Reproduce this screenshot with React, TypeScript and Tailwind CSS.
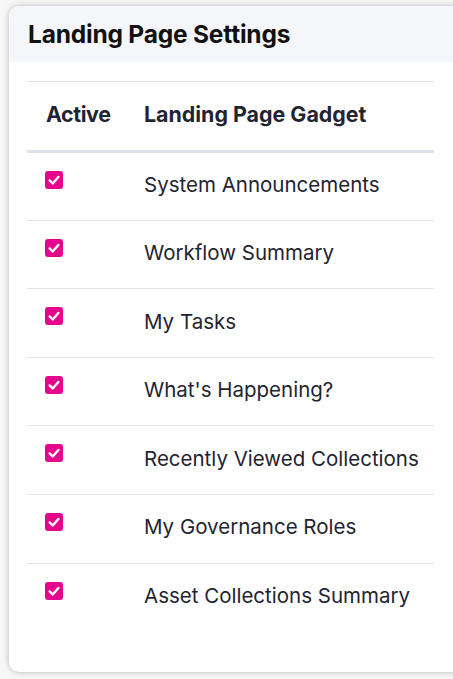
const gadgets = [
  "System Announcements",
  "Workflow Summary",
  "My Tasks",
  "What's Happening?",
  "Recently Viewed Collections",
  "My Governance Roles",
  "Asset Collections Summary",
];

function CheckBox() {
  return (
    <span className="flex h-[18px] w-[18px] items-center justify-center rounded-[3px] bg-[#e5068c]">
      <svg viewBox="0 0 16 16" className="h-[14px] w-[14px]">
        <path
          d="M3 8.5 L6.5 12 L13 4.5"
          fill="none"
          stroke="white"
          strokeWidth="2.8"
          strokeLinecap="round"
          strokeLinejoin="round"
        />
      </svg>
    </span>
  );
}

export default function App() {
  return (
    <div
      className="h-[679px] w-[453px] overflow-hidden bg-[#f7f7f7] pl-[9px] pt-[6px]"
      style={{ fontFamily: "Inter, 'Noto Sans', sans-serif" }}
    >
      <div className="h-[666px] w-[470px] overflow-hidden rounded-[10px] bg-white shadow-[0_0_6px_rgba(0,0,0,0.25)]">
        <div className="flex h-[56px] items-center bg-[#f5f6fa] px-[19px]">
          <h1 className="text-[24.5px] font-bold tracking-[-0.2px] text-[#111]">
            Landing Page Settings
          </h1>
        </div>

        <div className="px-[18px] pt-[19px]">
          <table className="w-[407px] border-collapse text-[#1f2430]">
            <thead>
              <tr className="h-[70px] border-t border-b-[3px] border-t-[#e2e2e2] border-b-[#dfe1e8]">
                <th className="w-[98px] pb-[4px] pl-[19px] text-left text-[21.4px] font-bold tracking-[-0.4px]">
                  Active
                </th>
                <th className="pb-[4px] pl-[19px] text-left text-[21.4px] font-bold">
                  Landing Page Gadget
                </th>
              </tr>
            </thead>
            <tbody>
              {gadgets.map((name, i) => (
                <tr
                  key={name}
                  className={
                    i < gadgets.length - 1
                      ? "h-[68.6px] border-b border-[#e5e5e5]"
                      : "h-[68.6px]"
                  }
                >
                  <td className="pl-[18px] pt-[18px] align-top">
                    <CheckBox />
                  </td>
                  <td className="pb-[2px] pl-[19px] text-[20.5px]">{name}</td>
                </tr>
              ))}
            </tbody>
          </table>
        </div>
      </div>
    </div>
  );
}
